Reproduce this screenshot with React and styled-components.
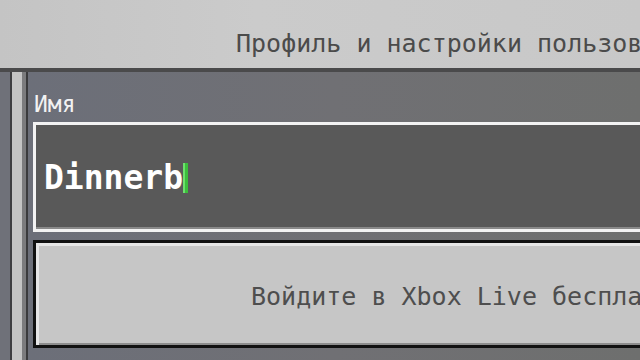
import React from "react"
import styled, { createGlobalStyle } from "styled-components"

const Global = createGlobalStyle`
  html, body {
    margin: 0;
    padding: 0;
    background: #6f7072;
    overflow: hidden;
  }
`

const Screen = styled.div`
  width: 640px;
  height: 360px;
  display: flex;
  flex-direction: column;
  overflow: hidden;
  font-family: "DejaVu Sans Mono", "Liberation Mono", monospace;
`

const Header = styled.div`
  flex: 0 0 auto;
  height: 72px;
  box-sizing: border-box;
  background: linear-gradient(to right, #c4c4c4, #cbcbcb 40%, #c8c8c8);
  border-bottom: 4px solid #4a4a4b;
  display: flex;
  align-items: flex-start;
  padding: 29px 0 0 236px;
  white-space: nowrap;
`

const Title = styled.div`
  font-size: 25px;
  line-height: 30px;
  color: #4b4b4b;
`

const Body = styled.div`
  flex: 1;
  display: flex;
  min-height: 0;
`

const Rail = styled.div`
  display: flex;
  flex: 0 0 auto;
`

const Stripe = styled.div`
  width: ${p => p.w}px;
  background: ${p => p.c};
`

const Content = styled.div`
  flex: 1;
  display: flex;
  flex-direction: column;
  padding: 16px 0 0 5px;
  background: linear-gradient(to right, #6c6f79, #707074 50%, #6e6f6e);
  overflow: hidden;
`

const Label = styled.div`
  font-size: 23px;
  line-height: 32px;
  color: #f2f2f2;
  margin-left: 1px;
  height: 34px;
`

const Input = styled.div`
  width: 680px;
  height: 110px;
  box-sizing: border-box;
  border: 3px solid #f3f3f3;
  background: #595959;
  box-shadow: inset 0 -2px 0 #8a8a8a;
  display: flex;
  align-items: center;
  padding: 2px 0 0 8px;
`

const Value = styled.span`
  font-size: 33px;
  font-weight: bold;
  color: #ffffff;
  line-height: 40px;
`

const Cursor = styled.span`
  width: 5px;
  height: 30px;
  margin-left: 0px;
  background: #3cbf3c;
  box-shadow: inset 2px 0 0 #6ee06e;
`

const Button = styled.div`
  margin-top: 8px;
  width: 680px;
  height: 108px;
  box-sizing: border-box;
  border: 3px solid #111111;
  background: #c6c6c6;
  box-shadow: inset 3px 3px 0 #e6e6e6, inset 0 -2px 0 #8d8d8d;
  display: flex;
  align-items: center;
  padding: 6px 0 0 215px;
  white-space: nowrap;
`

const ButtonText = styled.span`
  font-size: 25px;
  line-height: 30px;
  color: #4e4e4e;
`

export default function App() {
  return (
    <Screen>
      <Global />
      <Header>
        <Title>Профиль и настройки пользователя</Title>
      </Header>
      <Body>
        <Rail>
          <Stripe w={10} c="#6f7179" />
          <Stripe w={2} c="#3d3d40" />
          <Stripe w={10} c="#c3c3c3" />
          <Stripe w={4} c="#7b7b7d" />
          <Stripe w={2} c="#3a3a3c" />
        </Rail>
        <Content>
          <Label>Имя</Label>
          <Input>
            <Value>Dinnerb</Value>
            <Cursor />
          </Input>
          <Button>
            <ButtonText>Войдите в Xbox Live бесплатно</ButtonText>
          </Button>
        </Content>
      </Body>
    </Screen>
  )
}
